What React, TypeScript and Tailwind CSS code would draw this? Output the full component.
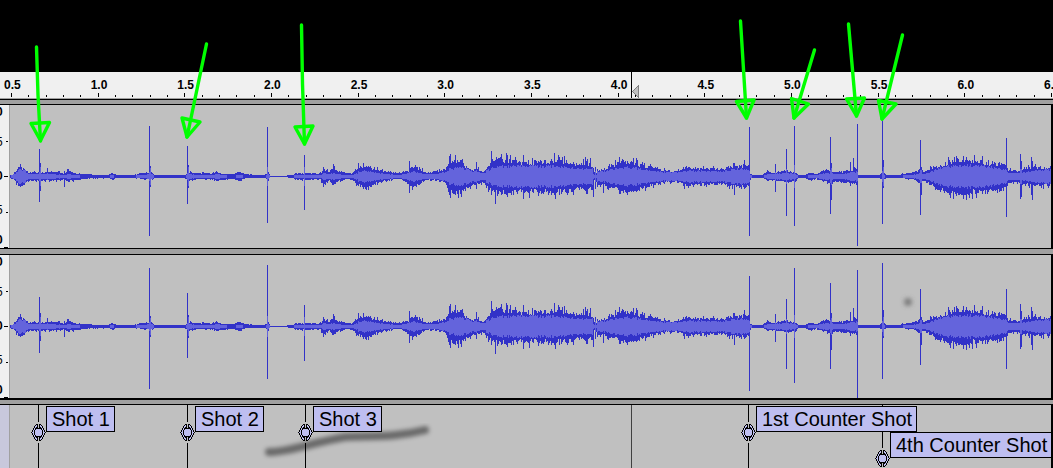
const START = 0.5;
const END = 6.5;
const WIDTH = 1041;
const GREEN = '#00ff00';

// x, peak above, peak below, rms (px around the centre line)
const ENVELOPE = [
  [0, 1, 1, 0], [4, 3, 3, 2], [10, 10, 13, 7], [15, 6, 8, 5], [18, 4, 4, 2], [30, 4, 4, 2],
  [40, 5, 4, 2], [55, 3, 3, 1], [58, 7, 5, 2], [64, 3, 4, 1], [75, 2, 2, 0], [98, 1, 1, 0],
  [102, 3, 3, 1], [106, 1, 1, 0], [122, 1, 1, 0], [130, 3, 2, 1], [142, 4, 3, 2], [144, 1, 1, 0],
  [174, 1, 1, 0], [179, 4, 4, 2], [190, 3, 2, 1], [202, 3, 3, 1], [206, 5, 4, 2], [212, 2, 3, 1],
  [222, 2, 2, 0], [228, 4, 4, 1], [236, 2, 1, 0], [254, 1, 1, 0], [258, 4, 3, 2], [260, 0, 0, 0],
  [271, 0, 0, 0], [282, 1, 1, 0], [285, 3, 3, 1], [310, 3, 3, 1], [314, 8, 9, 3], [319, 5, 4, 2],
  [323, 9, 9, 3], [328, 5, 5, 2], [336, 3, 3, 1], [342, 3, 3, 1], [347, 7, 8, 3], [352, 11, 11, 5],
  [357, 10, 12, 5], [363, 8, 8, 4], [375, 5, 4, 2], [390, 3, 2, 1], [399, 6, 8, 3], [402, 11, 13, 5],
  [409, 8, 7, 3], [416, 3, 3, 2], [424, 5, 3, 2], [435, 7, 6, 4], [440, 14, 16, 7], [450, 16, 17, 9],
  [456, 10, 14, 7], [462, 7, 8, 5], [468, 7, 8, 4], [473, 4, 6, 3], [478, 10, 13, 6], [483, 18, 18, 9],
  [500, 16, 17, 10], [520, 15, 16, 10], [545, 16, 17, 10], [556, 16, 16, 9], [568, 12, 14, 7],
  [576, 14, 14, 7], [584, 10, 12, 7], [588, 6, 8, 4], [600, 10, 11, 6], [609, 15, 15, 8], [618, 16, 16, 9],
  [630, 12, 13, 7], [642, 9, 9, 5], [656, 6, 6, 4], [666, 5, 5, 4], [674, 9, 9, 5], [692, 8, 8, 5],
  [714, 8, 8, 5], [726, 11, 11, 7], [738, 11, 11, 7], [740, 2, 2, 1], [742, 1, 1, 0], [752, 1, 1, 0],
  [757, 6, 4, 2], [762, 3, 3, 2], [775, 6, 5, 3], [785, 4, 5, 2], [788, 1, 1, 0], [794, 1, 1, 0],
  [800, 4, 4, 1], [806, 2, 2, 1], [816, 7, 6, 3], [828, 4, 5, 2], [840, 6, 7, 3], [846, 8, 8, 4],
  [848, 1, 1, 0], [868, 1, 1, 0], [873, 4, 3, 1], [876, 1, 1, 0], [888, 1, 1, 0], [896, 3, 2, 1],
  [903, 4, 3, 1], [909, 7, 7, 3], [914, 5, 5, 2], [922, 9, 9, 5], [930, 12, 14, 8], [940, 16, 18, 10],
  [958, 16, 17, 11], [972, 15, 17, 10], [985, 13, 15, 8], [996, 12, 13, 6], [998, 6, 6, 3],
  [1008, 6, 6, 3], [1014, 9, 9, 4], [1030, 9, 9, 6], [1038, 8, 9, 6], [1042, 10, 10, 6],
];

type Spike = [x: number, up: number, down: number, rms: number];

const DETAIL: Spike[] = [
  [30, 13, 14, 9], [37, 8, 3, 3], [54, 5, 10, 1], [140, 10, 10, 8], [178, 11, 11, 9], [313, 9, 10, 3],
  [323, 12, 8, 3], [409, 9, 8, 3], [348, 13, 9, 5], [353, 13, 12, 5], [399, 15, 16, 4], [439, 20, 18, 8],
  [440, 22, 21, 8], [445, 21, 18, 9], [448, 14, 21, 8], [451, 16, 20, 8], [466, 14, 12, 6],
  [481, 25, 18, 8], [485, 16, 27, 8], [491, 22, 18, 10], [496, 23, 18, 10], [500, 21, 16, 10],
  [513, 21, 22, 10], [544, 23, 18, 9], [545, 14, 22, 9], [549, 19, 18, 9], [552, 19, 15, 9],
  [575, 19, 14, 7], [577, 17, 17, 7], [580, 18, 10, 7], [583, 8, 20, 2], [584, 4, 3, 1],
  [586, 3, 5, 1], [593, 6, 16, 4], [612, 17, 14, 8], [623, 18, 15, 9], [626, 18, 15, 9],
  [724, 13, 18, 7], [734, 16, 12, 7], [765, 12, 15, 4], [821, 13, 23, 8], [840, 14, 9, 4],
  [843, 18, 6, 4], [873, 16, 11, 9], [911, 9, 18, 6], [946, 20, 19, 10], [959, 16, 21, 10],
  [953, 20, 22, 10], [972, 20, 17, 10], [956, 19, 23, 10], [1010, 22, 22, 7], [1011, 15, 20, 7],
  [1021, 19, 18, 5], [1022, 15, 23, 5],
];

const LEFT_SPIKES: Spike[] = [
  [29, 27, 25, 4], [139, 50, 59, 4], [177, 30, 27, 3], [257, 49, 46, 9], [294, 21, 33, 9],
  [739, 49, 59, 5], [776, 27, 39, 7], [784, 50, 49, 11], [820, 39, 37, 6], [847, 52, 69, 4],
  [872, 55, 47, 5], [910, 36, 38, 6], [996, 38, 40, 6],
];

const RIGHT_SPIKES: Spike[] = [
  [29, 29, 26, 4], [139, 58, 62, 4], [177, 33, 31, 3], [257, 61, 52, 10], [294, 21, 34, 9],
  [739, 50, 64, 5], [776, 27, 42, 7], [784, 58, 56, 11], [820, 43, 42, 6], [847, 56, 71, 4],
  [872, 63, 52, 5], [910, 37, 38, 6], [996, 37, 42, 6],
];

const LABELS = [
  { x: 872, text: '4th Counter Shot', row: 1 },
  { x: 28, text: 'Shot 1', row: 0 },
  { x: 177, text: 'Shot 2', row: 0 },
  { x: 295, text: 'Shot 3', row: 0 },
  { x: 738, text: '1st Counter Shot', row: 0 },
];

const ARROWS = [
  { shaft: 'M36.5 47L38 95L40.5 141', head: 'M31 123.5L49.5 122.5L40.500 140.500Z' },
  { shaft: 'M206.500 44L187 137', head: 'M182 118L200 122L187 137Z' },
  { shaft: 'M301.500 25L302.500 84L304.500 144', head: 'M295 127L313 126L304.500 144Z' },
  { shaft: 'M740.500 21L746.500 118', head: 'M736.500 101.500L754 100L746.500 118Z' },
  { shaft: 'M814.500 50L794 118', head: 'M791.500 98.500L808.500 104L794 118Z' },
  { shaft: 'M848.500 24L856.500 116', head: 'M846.500 99L864.500 98L856.500 116Z' },
  { shaft: 'M902.500 35L882 119', head: 'M878.500 100.500L896 104L882 119Z' },
];

const HANDLE = [
  '.....XX.XX.....',
  '....XoX.XoX....',
  '...XooX.XooX...',
  '...XoXX.XXoX...',
  '..XoXXXXXXXoX..',
  '..XoXoooooXoX..',
  '.XoXoooooooXoX.',
  '.XoXoooooooXoX.',
  'XooXoooooooXooX',
  '.XoXoooooooXoX.',
  '.XoXoooooooXoX.',
  '..XoXoooooXoX..',
  '..XoXXXXXXXoX..',
  '...XoXX.XXoX...',
  '...XooX.XooX...',
  '....XoX.XoX....',
  '.....XX.XX.....',
];

function pixels(mark: string) {
  return HANDLE.map((row, y) =>
    [...row].map((c, x) => (c === mark ? `M${x} ${y}h1v1h-1z` : '')).join(''),
  ).join('');
}

const HANDLE_LINE = pixels('X');
const HANDLE_FILL = pixels('o');

function noise(n: number) {
  const v = Math.sin(n * 127.1 + 11.7) * 43758.5453;
  return v - Math.floor(v);
}

// mostly even, with a taller column now and then
function jitter(n: number) {
  const r = noise(n);
  return 0.72 + 0.34 * noise(n + 500) + (r > 0.86 ? 0.26 : 0);
}

function buildWave(spikes: Spike[]) {
  const columns = new Map<number, Spike>();
  [...DETAIL, ...spikes].forEach((s) => columns.set(s[0], s));

  let peak = '';
  let rms = '';
  let k = 0;
  for (let x = 0; x < WIDTH; x++) {
    while (k < ENVELOPE.length - 2 && ENVELOPE[k + 1][0] <= x) k++;
    const a = ENVELOPE[k];
    const b = ENVELOPE[k + 1];
    const t = (x - a[0]) / (b[0] - a[0]);
    const mix = (i: number) => a[i] + (b[i] - a[i]) * t;
    let up = Math.round(mix(1) * jitter(x));
    let down = Math.round(mix(2) * jitter(x + 3000));
    let inner = Math.round(mix(3) * (0.8 + 0.35 * noise(x + 7000)));
    const spike = columns.get(x);
    if (spike) [, up, down, inner] = spike;
    peak += `M${x} ${71 - up}h1v${up + down + 1}h-1z`;
    if (inner > 0) rms += `M${x} ${71 - inner}h1v${inner * 2 + 1}h-1z`;
  }
  return { peak, rms };
}

const LEFT_WAVE = buildWave(LEFT_SPIKES);
const RIGHT_WAVE = buildWave(RIGHT_SPIKES);

function TimeRuler() {
  const marks = Array.from({ length: (END - START) * 2 }, (_, i) => (START + i / 2).toFixed(1));
  return (
    <div className="relative h-[27px] bg-[#f0f0f0] border-b border-[#a0a0a0] overflow-hidden">
      <div className="flex h-full ml-[11px] mr-[2px]">
        {marks.map((mark) => (
          <div key={mark} className="flex-1 min-w-0 flex flex-col">
            <span className="-ml-[7px] mt-[6px] text-xs leading-[14px] font-bold">{mark}</span>
            <div className="mt-px grid grid-cols-5 items-end h-1">
              <i className="h-1 border-l border-black" />
              <i className="h-[2px] border-l border-black" />
              <i className="h-[2px] border-l border-black" />
              <i className="h-[2px] border-l border-black" />
              <i className="h-[2px] border-l border-black" />
            </div>
          </div>
        ))}
        <div className="w-0">
          <span className="block -ml-[7px] mt-[6px] text-xs leading-[14px] font-bold">{END}</span>
          <i className="block mt-px h-1 border-l border-black" />
        </div>
      </div>
      <svg className="absolute left-[60%] top-0 -ml-px" width="8" height="26" shapeRendering="crispEdges">
        <path d="M0 0h1v26h-1z" fill="#000" />
        <path d="M1.500 19.500L7.500 13.500V25.500Z" fill="#c0c0c0" stroke="#808080" />
      </svg>
    </div>
  );
}

function Divider() {
  return <div className="h-[7px] border-y border-black bg-[#a0a0a0]" />;
}

function AmplitudeScale() {
  return (
    <div className="relative w-[10px] shrink-0 flex flex-col overflow-hidden bg-[#f0f0f0] border-r border-[#a0a0a0] text-xs leading-[14px]">
      <span className="-ml-1 font-bold">0</span>
      <span className="-ml-1 mt-4">5</span>
      <span className="-ml-1 mt-5 font-bold">0</span>
      <span className="-ml-1 mt-5">5</span>
      <span className="-ml-1 mt-4 font-bold">0</span>
      <svg className="absolute right-0 top-0" width="5" height="143" shapeRendering="crispEdges">
        <path d="M2 36h2v1h-2zM0 71h4v1h-4zM2 107h2v1h-2zM0 142h4v1h-4z" />
      </svg>
    </div>
  );
}

function Track({ wave }: { wave: { peak: string; rms: string } }) {
  return (
    <div className="flex h-[143px]">
      <AmplitudeScale />
      <svg
        className="flex-1 min-w-0 h-full bg-[#c0c0c0]"
        viewBox="0 0 1041 143"
        preserveAspectRatio="none"
        shapeRendering="crispEdges"
      >
        <path d={wave.peak} fill="#3232c8" />
        <path d={wave.rms} fill="#6464dc" />
      </svg>
      <div className="w-[2px] bg-black" />
    </div>
  );
}

function LabelHandle() {
  return (
    <svg className="block" width="15" height="17" shapeRendering="crispEdges">
      <path d={HANDLE_FILL} fill="#bebef0" />
      <path d={HANDLE_LINE} fill="#000" />
    </svg>
  );
}

function LabelTrack() {
  return (
    <div className="flex h-[63px]">
      <div className="w-[10px] shrink-0 bg-[#c8c8dc] border-r border-[#a0a0a0]" />
      <div className="relative flex-1 bg-[#c0c0c0]">
        <div className="absolute inset-y-0 left-[60%] -ml-1 w-px bg-[#404040]" />
        <svg className="absolute left-[250px] top-[18px]" width="180" height="40">
          <path
            d="M9 29C30 29 50 20 85 14C116 13 138 14 165 7"
            fill="none"
            stroke="#000"
            strokeOpacity="0.45"
            strokeWidth="8"
            strokeLinecap="round"
            className="blur-[2px]"
          />
        </svg>
        {LABELS.map((label) => (
          <div
            key={label.text}
            className="absolute inset-y-0 overflow-y-clip"
            style={{ left: `${(label.x / WIDTH) * 100}%` }}
          >
            <div className={label.row ? 'h-[43px] w-px bg-black' : 'h-[17px] w-px bg-black'} />
            <div className="-ml-[7px] mt-[2px] w-[15px]">
              <LabelHandle />
            </div>
            <div className="mt-[2px] h-10 w-px bg-black" />
            <span
              className={`absolute left-2 ${label.row ? 'top-[27px]' : 'top-px'} flex h-[26px] items-center whitespace-nowrap border border-black bg-[#bebef0] pl-[5px] pr-1 text-xl leading-6`}
            >
              {label.text}
            </span>
          </div>
        ))}
      </div>
      <div className="w-[2px] bg-black" />
    </div>
  );
}

export default function App() {
  return (
    <main className="relative overflow-hidden bg-black pt-[72px] font-['Liberation_Sans',Arial,sans-serif] text-black">
      <TimeRuler />
      <div className="h-[6px] border-y border-black bg-[#a0a0a0]" />
      <Track wave={LEFT_WAVE} />
      <Divider />
      <Track wave={RIGHT_WAVE} />
      <div className="h-[7px] border-t-2 border-b border-black bg-[#a0a0a0]" />
      <LabelTrack />

      <svg className="absolute left-0 top-0 pointer-events-none" width="1053" height="468">
        <defs>
          <filter id="smudge" x="-1" y="-1" width="3" height="3">
            <feGaussianBlur stdDeviation="2" />
          </filter>
        </defs>
        <circle cx="908" cy="302" r="4" fill="#606060" fillOpacity="0.7" filter="url(#smudge)" />
        {ARROWS.map((arrow) => (
          <g key={arrow.shaft} fill="none" stroke={GREEN} strokeWidth="3.4" strokeLinejoin="round">
            <path d={arrow.shaft} strokeLinecap="round" />
            <path d={arrow.head} />
          </g>
        ))}
      </svg>
    </main>
  );
}
